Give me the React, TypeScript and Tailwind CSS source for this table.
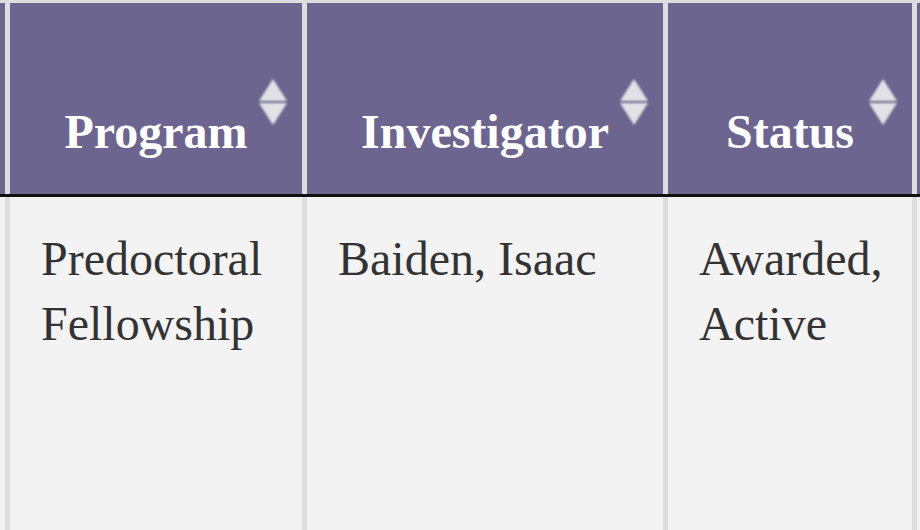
import React from 'react';

const SortIcon: React.FC = () => (
  <svg
    width="28"
    height="46"
    viewBox="0 0 28 46"
    className="absolute right-[15px] top-[76px] blur-[0.8px]"
  >
    <polygon points="14,0 28,22 0,22" fill="#e2e1e6" />
    <polygon points="0,24 28,24 14,46" fill="#e2e1e6" />
  </svg>
);

const columns = [
  { title: 'Program', width: 'w-[292px]', lines: ['Predoctoral', 'Fellowship'] },
  { title: 'Investigator', width: 'w-[356px]', lines: ['Baiden, Isaac'] },
  { title: 'Status', width: 'w-[244px]', lines: ['Awarded,', 'Active'] },
];

export default function App() {
  return (
    <div
      className="w-[920px] h-[530px] overflow-hidden bg-[#dddddd] pt-[3px] flex flex-col"
      style={{ fontFamily: '"Liberation Serif", "Times New Roman", serif' }}
    >
      {/* Header */}
      <div className="flex gap-[5px] h-[191px] shrink-0">
        <div className="w-[5px] shrink-0 bg-[#6b658f]" />
        {columns.map((c) => (
          <div
            key={c.title}
            className={`${c.width} shrink-0 relative bg-[#6b658f] flex items-end justify-center pb-[35px]`}
          >
            <span className="text-white font-bold text-[48px] leading-[55px]">{c.title}</span>
            <SortIcon />
          </div>
        ))}
        <div className="w-[20px] shrink-0 bg-[#6b658f]" />
      </div>
      <div className="h-[3px] bg-[#111111] shrink-0" />

      {/* Body row */}
      <div className="flex gap-[5px] flex-1">
        <div className="w-[5px] shrink-0 bg-[#f3f3f3]" />
        {columns.map((c) => (
          <div
            key={c.title}
            className={`${c.width} shrink-0 bg-[#f3f3f3] pt-[29px] pl-[31px] text-[48px] leading-[65px] text-[#333333]`}
          >
            {c.lines.map((l) => (
              <div key={l}>{l}</div>
            ))}
          </div>
        ))}
        <div className="w-[20px] shrink-0 bg-[#f3f3f3]" />
      </div>
    </div>
  );
}
